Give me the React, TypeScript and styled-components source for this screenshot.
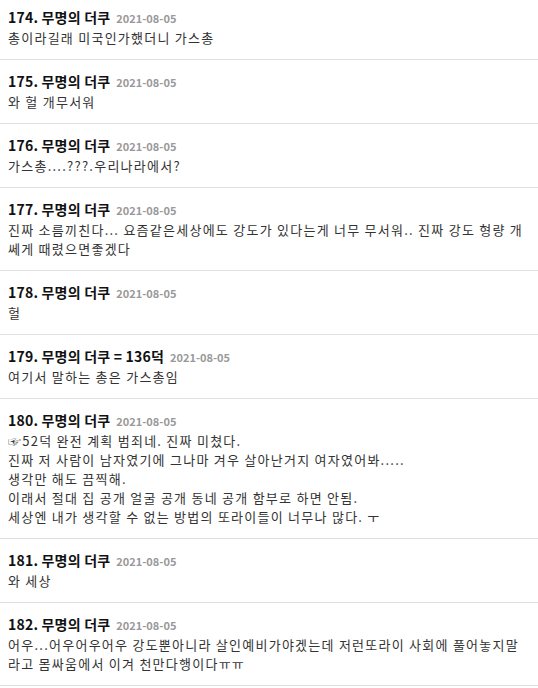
import styled, { createGlobalStyle } from "styled-components";

const GlobalStyle = createGlobalStyle`
  html, body {
    margin: 0;
    padding: 0;
    background: #fff;
  }
  body {
    font-family: "Noto Sans CJK KR", "Noto Sans", sans-serif;
  }
`;

const List = styled.ul`
  list-style: none;
  margin: 0;
  padding: 0;
  width: 538px;
`;

const Item = styled.li`
  padding: 11px 8px 12px;
  border-bottom: 1px solid #e0e0e0;
  &:first-child {
    padding-top: 7px;
  }
`;

const Header = styled.div`
  display: flex;
  align-items: baseline;
  gap: 6px;
  height: 21px;
  line-height: 21px;
  overflow: hidden;
`;

const Name = styled.span`
  font-size: 14px;
  font-weight: 700;
  letter-spacing: 0.2px;
  color: #111;
`;

const Date = styled.span`
  font-size: 11px;
  font-weight: 700;
  color: #999;
`;

const Body = styled.div`
  font-size: 13px;
  line-height: 19px;
  letter-spacing: 1.25px;
  color: #333;
  white-space: pre-line;
  word-break: break-all;
`;

type Comment = { no: number; name: string; date: string; text: string };

const comments: Comment[] = [
  { no: 174, name: "무명의 더쿠", date: "2021-08-05", text: "총이라길래 미국인가했더니 가스총" },
  { no: 175, name: "무명의 더쿠", date: "2021-08-05", text: "와 헐 개무서워" },
  { no: 176, name: "무명의 더쿠", date: "2021-08-05", text: "가스총....???.우리나라에서?" },
  {
    no: 177,
    name: "무명의 더쿠",
    date: "2021-08-05",
    text: "진짜 소름끼친다... 요즘같은세상에도 강도가 있다는게 너무 무서워.. 진짜 강도 형량 개쎄게 때렸으면좋겠다",
  },
  { no: 178, name: "무명의 더쿠", date: "2021-08-05", text: "헐" },
  { no: 179, name: "무명의 더쿠 = 136덕", date: "2021-08-05", text: "여기서 말하는 총은 가스총임" },
  {
    no: 180,
    name: "무명의 더쿠",
    date: "2021-08-05",
    text:
      "☞52덕 완전 계획 범죄네. 진짜 미쳤다.\n진짜 저 사람이 남자였기에 그나마 겨우 살아난거지 여자였어봐.....\n생각만 해도 끔찍해.\n이래서 절대 집 공개 얼굴 공개 동네 공개 함부로 하면 안됨.\n세상엔 내가 생각할 수 없는 방법의 또라이들이 너무나 많다. ㅜ",
  },
  { no: 181, name: "무명의 더쿠", date: "2021-08-05", text: "와 세상" },
  {
    no: 182,
    name: "무명의 더쿠",
    date: "2021-08-05",
    text: "어우...어우어우어우 강도뿐아니라 살인예비가야겠는데 저런또라이 사회에 풀어놓지말라고 몸싸움에서 이겨 천만다행이다ㅠㅠ",
  },
];

export default function App() {
  return (
    <>
      <GlobalStyle />
      <List>
        {comments.map((c) => (
          <Item key={c.no}>
            <Header>
              <Name>
                {c.no}. {c.name}
              </Name>
              <Date>{c.date}</Date>
            </Header>
            <Body>{c.text}</Body>
          </Item>
        ))}
      </List>
    </>
  );
}
